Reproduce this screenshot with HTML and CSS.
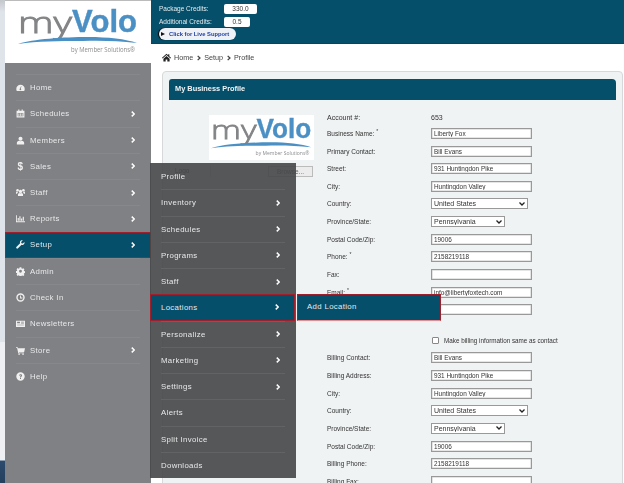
FILE: index.html
```html
<!DOCTYPE html>
<html lang="en">

<head>
  <meta charset="UTF-8">
  <meta name="viewport" content="width=device-width, initial-scale=1.0">
  <title>My Business Profile</title>
  <link rel="stylesheet" href="styles.css">
</head>

<body>
  <svg class="defs" width="0" height="0">
    <symbol id="logo" viewBox="0 -5 120 57">
      <text class="logo-my" x="0" y="27" textLength="54" lengthAdjust="spacingAndGlyphs">my</text>
      <text class="logo-volo" x="54" y="26" textLength="65" lengthAdjust="spacingAndGlyphs">Volo</text>
      <path d="M0 38C15 33 45 31 70 31C90 31 108 33 119 37C100 35 85 34.500 65 35C40 35 20 35 0 38Z" fill="#4a90c4" />
      <text class="logo-by" x="53" y="46" textLength="64" lengthAdjust="spacingAndGlyphs">by Member Solutions®</text>
    </symbol>
    <symbol id="i-home" viewBox="0 0 16 16">
      <path d="M8 3a7.500 7.500 0 0 0-7.500 7.500c0 1.300.3 2.400.9 3.500h13.200c.6-1.100.9-2.200.9-3.500A7.500 7.500 0 0 0 8 3zM8 13a1.800 1.800 0 0 1-.8-3.400L9 5.500l.6.2-1 4.300A1.800 1.800 0 0 1 8 13z" />
    </symbol>
    <symbol id="i-cal" viewBox="0 0 16 16">
      <path fill-rule="evenodd" d="M1 3h3V1h2v2h4V1h2v2h3v12H1zM3 7v6h10V7z" />
      <path d="M4 8h2v2H4zM7 8h2v2H7zM10 8h2v2h-2zM4 11h2v1.500H4zM7 11h2v1.500H7zM10 11h2v1.500h-2z" />
    </symbol>
    <symbol id="i-user" viewBox="0 0 16 16">
      <circle cx="8" cy="5" r="3.600" />
      <path d="M1.500 15v-2.500C1.500 10 3.500 8.800 5.500 8.500c1.500 1 3.500 1 5 0 2 .3 4 1.500 4 4V15z" />
    </symbol>
    <symbol id="i-users" viewBox="0 0 16 16">
      <circle cx="8" cy="6" r="3" />
      <circle cx="2.800" cy="4" r="2.300" />
      <circle cx="13.200" cy="4" r="2.300" />
      <path d="M3.500 14v-2.500c0-1.500 1.200-2.500 2.500-2.700 1.300.7 2.700.7 4 0 1.300.2 2.500 1.200 2.500 2.700V14z" />
      <path d="M0 10V8c0-1 .8-1.700 1.800-1.800.5.500 1 .7 1.600.7-.1 1-.9 1.600-1.500 3.100zM16 10V8c0-1-.8-1.700-1.800-1.800-.5.500-1 .7-1.600.7.100 1 .9 1.600 1.500 3.100z" />
    </symbol>
    <symbol id="i-chart" viewBox="0 0 16 16">
      <path d="M0 2h1.500v11H16v1.500H0z" />
      <path d="M3 7h2v5H3zM6 4h2v8H6zM9 8h2v4H9zM12 5h2v7h-2z" />
    </symbol>
    <symbol id="i-wrench" viewBox="0 0 16 16">
      <path d="M15 3.500l-3 2.800-2.300-.5-.6-2.300L12 .8C9.800 0 7.300 1.300 7 3.600c-.1.800 0 1.500.3 2.100L1 12c-1 1-.9 2.100-.2 2.800.8.700 1.900.8 2.800-.1l6.300-6.300c.7.300 1.400.4 2.200.3 2.300-.4 3.600-2.900 2.900-5.200z" />
    </symbol>
    <symbol id="i-cog" viewBox="0 0 16 16">
      <path fill-rule="evenodd" d="M6.500 1h3l.4 2 1.400.6 1.700-1.100 2 2-1.100 1.700.6 1.400 2 .4v3l-2 .4-.6 1.400 1.100 1.700-2 2-1.700-1.100-1.400.6-.4 1.900h-3l-.4-2-1.400-.6-1.700 1.100-2-2 1.100-1.700-.6-1.400-2-.4v-3l2-.4.6-1.400-1.100-1.700 2-2 1.700 1.100 1.400-.6zM8 5.500a2.500 2.500 0 1 0 0 5 2.500 2.500 0 0 0 0-5z" transform="translate(0 -.5)" />
    </symbol>
    <symbol id="i-clock" viewBox="0 0 16 16">
      <path fill-rule="evenodd" d="M8 .5a7.500 7.500 0 1 1 0 15 7.500 7.500 0 0 1 0-15zM8 3a5 5 0 1 0 0 10A5 5 0 0 0 8 3z" />
      <path d="M7.200 4.500h1.600v3.700h2.700v1.500H7.200z" />
    </symbol>
    <symbol id="i-news" viewBox="0 0 16 16">
      <path fill-rule="evenodd" d="M0 3h16v11H0zM2 5v2.500h5V5zM9 5v1h5V5zM9 7.500v1h5v-1zM2 10v1h12v-1z" />
    </symbol>
    <symbol id="i-cart" viewBox="0 0 16 16">
      <path d="M0 2h3l.5 2H16l-1.500 6.500H5l.3 1.200H14V13H4L2 3.500H0z" />
      <circle cx="5.500" cy="14.500" r="1.400" />
      <circle cx="12.500" cy="14.500" r="1.400" />
    </symbol>
    <symbol id="i-help" viewBox="0 0 16 16">
      <path fill-rule="evenodd" d="M8 .5a7.500 7.500 0 1 1 0 15 7.500 7.500 0 0 1 0-15zM5.500 6.200l1.600.5C7.300 6 7.600 5.700 8 5.700s.8.300.8.700c0 .9-1.700 1.200-1.700 3v.3h1.800c0-1.400 1.900-1.700 1.900-3.500C10.800 5 9.600 4 8 4 6.800 4 5.900 4.900 5.500 6.200zM7.100 10.700v1.800h1.800v-1.800z" />
    </symbol>
    <symbol id="i-house" viewBox="0 0 16 16">
      <path d="M8 1.500L0 8.500l1 1.100L8 3.500l7 6.100 1-1.100-3-2.600V2h-2v2.200z" />
      <path d="M2.500 10L8 5.200 13.500 10v5H9.500v-3.500h-3V15H2.500z" />
    </symbol>
    <symbol id="chev" viewBox="0 0 6 8">
      <path d="M1 .8L4.400 4 1 7.200" fill="none" stroke="currentColor" stroke-width="2" />
    </symbol>
  </svg>

  <div class="strip"></div>

  <aside class="sidebar">
    <div class="side-logo"><svg class="logo-big">
        <use href="#logo" />
      </svg></div>
    <ul class="nav">
      <li><a><svg class="ico"><use href="#i-home" /></svg>Home</a></li>
      <li><a><svg class="ico"><use href="#i-cal" /></svg>Schedules<svg class="chev"><use href="#chev" /></svg></a></li>
      <li><a><svg class="ico"><use href="#i-user" /></svg>Members<svg class="chev"><use href="#chev" /></svg></a></li>
      <li><a><span class="ico dollar">$</span>Sales<svg class="chev"><use href="#chev" /></svg></a></li>
      <li><a><svg class="ico"><use href="#i-users" /></svg>Staff<svg class="chev"><use href="#chev" /></svg></a></li>
      <li><a><svg class="ico"><use href="#i-chart" /></svg>Reports<svg class="chev"><use href="#chev" /></svg></a></li>
      <li class="active"><a><svg class="ico"><use href="#i-wrench" /></svg>Setup<svg class="chev"><use href="#chev" /></svg></a></li>
      <li><a><svg class="ico"><use href="#i-cog" /></svg>Admin</a></li>
      <li><a><svg class="ico"><use href="#i-clock" /></svg>Check In</a></li>
      <li><a><svg class="ico"><use href="#i-news" /></svg>Newsletters</a></li>
      <li><a><svg class="ico"><use href="#i-cart" /></svg>Store<svg class="chev"><use href="#chev" /></svg></a></li>
      <li><a><svg class="ico"><use href="#i-help" /></svg>Help</a></li>
    </ul>

    <ul class="flyout">
      <li><a>Profile</a></li>
      <li><a>Inventory<svg class="chev"><use href="#chev" /></svg></a></li>
      <li><a>Schedules<svg class="chev"><use href="#chev" /></svg></a></li>
      <li><a>Programs<svg class="chev"><use href="#chev" /></svg></a></li>
      <li><a>Staff<svg class="chev"><use href="#chev" /></svg></a></li>
      <li class="active">
        <a>Locations<svg class="chev"><use href="#chev" /></svg></a>
        <div class="flyout-2">Add Location</div>
      </li>
      <li><a>Personalize<svg class="chev"><use href="#chev" /></svg></a></li>
      <li><a>Marketing<svg class="chev"><use href="#chev" /></svg></a></li>
      <li><a>Settings<svg class="chev"><use href="#chev" /></svg></a></li>
      <li><a>Alerts</a></li>
      <li><a>Split Invoice</a></li>
      <li><a>Downloads</a></li>
    </ul>
  </aside>

  <main class="main">
    <header class="topbar">
      <div class="credit"><span>Package Credits:</span><b class="credit-box">330.0</b></div>
      <div class="credit"><span>Additional Credits:</span><b class="credit-box small">0.5</b></div>
      <a class="support"><i class="support-arrow"></i>Click for Live Support</a>
    </header>

    <nav class="crumbs">
      <svg class="crumb-home"><use href="#i-house" /></svg>
      <span>Home</span><svg class="crumb-sep"><use href="#chev" /></svg>
      <span>Setup</span><svg class="crumb-sep"><use href="#chev" /></svg>
      <span>Profile</span>
    </nav>

    <section class="panel">
      <h1 class="panel-head">My Business Profile</h1>
      <div class="panel-body">
        <div class="logo-col">
          <div class="form-logo"><svg class="logo-small">
              <use href="#logo" />
            </svg></div>
          <div class="logo-upload">
            <span class="logo-label">Logo</span>
            <span class="file-name"></span>
            <button class="browse" type="button">Browse...</button>
          </div>
        </div>

        <form class="fields">
          <div class="row account"><label>Account #:</label><span>653</span></div>
          <div class="row"><label>Business Name: <sup>*</sup></label><input value="Liberty Fox"></div>
          <div class="row"><label>Primary Contact:</label><input value="Bill Evans"></div>
          <div class="row"><label>Street:</label><input value="931 Huntingdon Pike"></div>
          <div class="row"><label>City:</label><input value="Huntingdon Valley"></div>
          <div class="row"><label>Country:</label><select class="sel-country"><option>United States</option></select></div>
          <div class="row"><label>Province/State:</label><select class="sel-state"><option>Pennsylvania</option></select></div>
          <div class="row"><label>Postal Code/Zip:</label><input value="19006"></div>
          <div class="row"><label>Phone: <sup>*</sup></label><input value="2158219118"></div>
          <div class="row"><label>Fax:</label><input></div>
          <div class="row"><label>Email: <sup>*</sup></label><input value="info@libertyfoxtech.com"></div>
          <div class="row"><label></label><input></div>

          <div class="same-row"><input type="checkbox"><span>Make billing information same as contact</span></div>

          <div class="row"><label>Billing Contact:</label><input value="Bill Evans"></div>
          <div class="row"><label>Billing Address:</label><input value="931 Huntingdon Pike"></div>
          <div class="row"><label>City:</label><input value="Huntingdon Valley"></div>
          <div class="row"><label>Country:</label><select class="sel-country"><option>United States</option></select></div>
          <div class="row"><label>Province/State:</label><select class="sel-state"><option>Pennsylvania</option></select></div>
          <div class="row"><label>Postal Code/Zip:</label><input value="19006"></div>
          <div class="row"><label>Billing Phone:</label><input value="2158219118"></div>
          <div class="row"><label>Billing Fax:</label><input></div>
        </form>
      </div>
    </section>
  </main>
</body>

</html>
```
FILE: styles.css
```css
* {
  box-sizing: border-box;
}

html,
body {
  height: 483px;
  margin: 0;
  overflow: hidden;
}

body {
  display: flex;
  background-color: #fff;
  font-family: "Liberation Sans", Arial, sans-serif;
  color: #333;
  filter: blur(.35px);
}

.defs {
  position: absolute;
}

symbol {
  overflow: visible;
}

ul {
  list-style: none;
  margin: 0;
  padding: 0;
}

/* bit of the desktop behind the window */
.strip {
  flex: 0 0 5px;
  background: linear-gradient(#c4c8cd 0, #dfe3ea 12px, #dfe3ea 342px, #eef0f4 342px, #eef0f4 460px, #2c4a6c 461px, #24405f 483px);
}

.sidebar {
  flex: 0 0 145px;
  position: relative;
  background-color: #808184;
  border-top: 1px solid #bbb;
}

.side-logo {
  height: 62px;
  background-color: #fff;
  padding-left: 13px;
}

.logo-big {
  display: block;
  width: 120px;
  height: 57px;
  overflow: visible;
}

.logo-my {
  font: 300 30px "Open Sans", sans-serif;
  fill: #838486;
  stroke: #838486;
  stroke-width: .9px;
}

.logo-volo {
  font: 700 32px "Liberation Sans", sans-serif;
  fill: #4a90c4;
  stroke: #4a90c4;
  stroke-width: .4px;
}

.logo-by {
  font: 400 7px "Open Sans", sans-serif;
  fill: #8b8c8e;
}

.nav {
  padding-top: 11px;
}

.nav li,
.flyout li {
  height: 26.25px;
}

.nav a,
.flyout a {
  display: flex;
  align-items: center;
  height: 100%;
  margin: 0 11px;
  border-top: 1px solid #87888b;
  font-size: 7.8px;
  letter-spacing: .35px;
  color: #e8e9ea;
}

.nav .ico {
  flex: 0 0 9px;
  width: 9px;
  height: 9px;
  margin-right: 5px;
  fill: #f0f0f0;
}

.dollar {
  font-size: 10px;
  font-weight: 700;
  text-align: center;
  line-height: 9px;
  color: #f0f0f0;
}

.chev {
  width: 4.5px;
  height: 6px;
  margin-left: auto;
  margin-right: 5px;
  color: #fff;
}

.nav .active {
  position: relative;
  width: 146px;
  background-color: #054f6a;
  box-shadow: inset 0 0 0 1px #a11e2d;
}

.nav .active a {
  border-top: 0;
}

.flyout {
  position: absolute;
  left: 145px;
  top: 162px;
  width: 146px;
  height: 315px;
  background-color: rgba(70, 71, 73, .91);
}

.flyout a {
  border-top-color: #626365;
}

.flyout li:first-child a {
  border-top: 0;
}

.flyout .active {
  position: relative;
  width: 145px;
  background-color: #054f6a;
  box-shadow: inset 0 0 0 1px #a11e2d;
}

.flyout .active a {
  border-top: 0;
}

.flyout-2 {
  position: absolute;
  left: 147px;
  top: 0;
  width: 144px;
  height: 27px;
  padding-left: 9px;
  background-color: #054f6a;
  border: 1px solid #a11e2d;
  border-bottom-color: #e98a8f;
  font-size: 7.8px;
  letter-spacing: .35px;
  line-height: 24px;
  color: #e8e9ea;
}

.main {
  flex: 1;
  min-width: 0;
}

.topbar {
  height: 44px;
  padding: 2px 0 0 8px;
  background-color: #054f6a;
  border-bottom: 1px solid #0b4458;
  font-size: 6.5px;
  color: #e4ecef;
}

.credit {
  display: flex;
  align-items: center;
  height: 13px;
}

.credit span {
  width: 65px;
}

.credit-box {
  width: 33px;
  height: 10px;
  background-color: #fff;
  border-radius: 2px;
  font-weight: 400;
  font-size: 6.5px;
  line-height: 10px;
  text-align: center;
  color: #333;
}

.credit-box.small {
  width: 26px;
}

.support {
  display: flex;
  align-items: center;
  width: 77px;
  height: 12px;
  padding-left: 2px;
  background-color: #eef1f6;
  border-radius: 6px;
  box-shadow: -1px 0 1px #000;
  font-size: 5.8px;
  font-weight: 700;
  color: #1f3f9f;
}

.support-arrow {
  width: 0;
  height: 0;
  margin-right: 4px;
  border-left: 4px solid #111;
  border-top: 2.5px solid transparent;
  border-bottom: 2.5px solid transparent;
}

.crumbs {
  display: flex;
  align-items: center;
  height: 27px;
  padding-left: 11px;
  font-size: 7.2px;
  color: #444;
}

.crumb-home {
  width: 9px;
  height: 9px;
  margin-right: 3px;
  fill: #222;
}

.crumb-sep {
  width: 4px;
  height: 6px;
  margin: 0 3px 0 4px;
  color: #444;
}

.panel {
  height: 420px;
  margin: 0 1px 0 11px;
  padding: 7px 6px 0;
  background-color: #f0f3f4;
  border: 1px solid #d6d8d9;
  border-radius: 4px;
}

.panel-head {
  height: 21px;
  margin: 0;
  padding-left: 6px;
  background-color: #054f6a;
  border-radius: 3px 4px 0 0;
  font-size: 7.4px;
  font-weight: 700;
  line-height: 20px;
  color: #f0f5f7;
}

.panel-body {
  display: flex;
  padding-top: 10.6px;
}

.logo-col {
  flex: 0 0 158px;
}

.form-logo {
  display: flow-root;
  width: 105px;
  height: 45px;
  margin: 4.4px 0 0 40px;
  padding-left: 2px;
  background-color: #fff;
}

.logo-small {
  display: block;
  width: 101px;
  height: 48px;
  margin-top: -3px;
  overflow: visible;
}

.logo-upload {
  display: flex;
  align-items: flex-start;
  width: 144px;
  height: 11px;
  margin-top: 6px;
  padding-left: 6px;
  font-size: 6.5px;
}

.logo-label {
  width: 35px;
  line-height: 9px;
}

.file-name {
  width: 58px;
  height: 11px;
  border-left: 1px solid #ccc;
}

.browse {
  width: 45px;
  height: 11px;
  padding: 0;
  background-color: #ececec;
  border: 1px solid #bbb;
  font: 6.5px "Liberation Sans", sans-serif;
  color: #666;
}

.fields {
  flex: 1;
  font-size: 6.5px;
}

.row {
  display: grid;
  grid-template-columns: 104px 1fr;
  align-items: center;
  height: 17.65px;
}

.row.account {
  height: 14px;
  font-size: 7px;
}

.row sup {
  font-size: 5px;
  line-height: 0;
}

.row input {
  width: 101px;
  height: 11px;
  padding: 0 2px;
  background-color: #fff;
  border: 1px solid #999;
  box-shadow: inset 0 0 0 .5px #ccc;
  font: 6.4px "Liberation Sans", sans-serif;
  color: #333;
}

.row select {
  appearance: none;
  height: 11px;
  padding: 0 0 0 2px;
  background: #fff url("data:image/svg+xml,%3Csvg xmlns='http://www.w3.org/2000/svg' width='6' height='4'%3E%3Cpath d='M.5.5L3 3 5.500.5' fill='none' stroke='%23222' stroke-width='1.300'/%3E%3C/svg%3E") no-repeat right 2px center;
  border: 1px solid #999;
  border-radius: 0;
  font: 7px "Liberation Sans", sans-serif;
  color: #333;
}

.sel-country {
  width: 97px;
}

.sel-state {
  width: 74px;
}

.same-row {
  display: flex;
  align-items: center;
  height: 16.7px;
  margin-top: 13.7px;
  padding-left: 105px;
  font-size: 6.3px;
  color: #333;
}

.same-row input {
  appearance: none;
  width: 7px;
  height: 7px;
  margin: 0 5px 0 0;
  background-color: #fff;
  border: 1px solid #888;
  border-radius: 1px;
}
```
